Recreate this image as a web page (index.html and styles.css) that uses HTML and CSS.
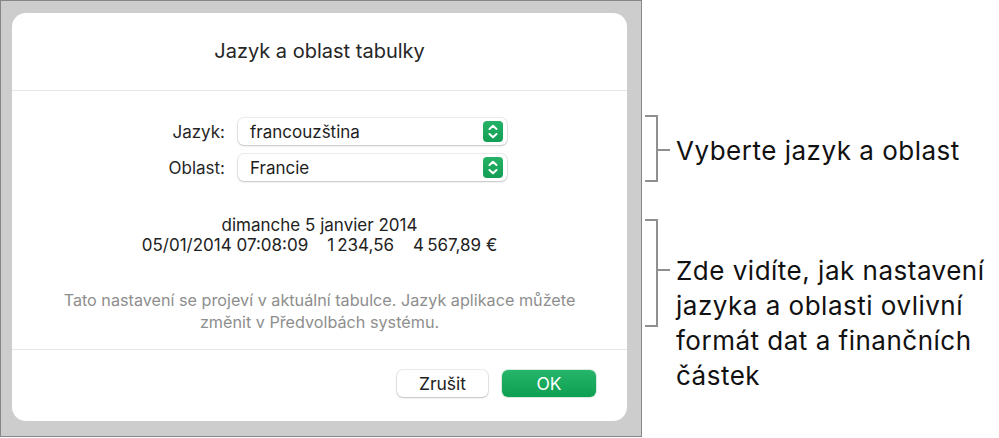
FILE: index.html
```html
<!DOCTYPE html>
<html lang="cs">
<head>
  <meta charset="UTF-8">
  <title>Jazyk a oblast tabulky</title>
  <meta name="viewport" content="width=device-width, initial-scale=1.0">
  <link rel="stylesheet" href="styles.css">
</head>
<body>
  <div class="stage">
    <div class="backdrop">
      <div class="dialog">
        <h1 class="dialog-title">Jazyk a oblast tabulky</h1>
        <div class="dialog-body">
          <div class="form">
            <label class="form-label">Jazyk:</label>
            <div class="popup">
              <span>francouzština</span>
              <span class="stepper">
                <svg width="20" height="21" viewBox="0 0 20 21"><path d="M6.5 8 L10 4.8 L13.5 8 M6.5 13 L10 16.2 L13.5 13" fill="none" stroke="#fff" stroke-width="2" stroke-linecap="round" stroke-linejoin="round"/></svg>
              </span>
            </div>
            <label class="form-label">Oblast:</label>
            <div class="popup">
              <span>Francie</span>
              <span class="stepper">
                <svg width="20" height="21" viewBox="0 0 20 21"><path d="M6.5 8 L10 4.8 L13.5 8 M6.5 13 L10 16.2 L13.5 13" fill="none" stroke="#fff" stroke-width="2" stroke-linecap="round" stroke-linejoin="round"/></svg>
              </span>
            </div>
          </div>
          <div class="preview">
            <div>dimanche 5 janvier 2014</div>
            <div class="preview-row">
              <span>05/01/2014 07:08:09</span>
              <span>1&#8239;234,56</span>
              <span>4&#8239;567,89&nbsp;€</span>
            </div>
          </div>
          <p class="note">Tato nastavení se projeví v aktuální tabulce. Jazyk aplikace můžete<br>změnit v Předvolbách systému.</p>
        </div>
        <div class="dialog-footer">
          <button class="btn">Zrušit</button>
          <button class="btn btn-ok">OK</button>
        </div>
      </div>
    </div>
    <div class="callouts">
      <div class="callout callout-short">
        <svg class="bracket" width="27" height="67" viewBox="0 0 27 67"><path d="M1 1 H13 V66 H1 M13 35 H26" fill="none" stroke="#8f8f8f" stroke-width="2"/></svg>
        <div class="callout-text">Vyberte jazyk a oblast</div>
      </div>
      <div class="callout callout-long">
        <svg class="bracket" width="27" height="108" viewBox="0 0 27 108"><path d="M1 1 H13 V107 H1 M13 51 H26" fill="none" stroke="#8f8f8f" stroke-width="2"/></svg>
        <div class="callout-text">Zde vidíte, jak nastavení<br>jazyka a oblasti ovlivní<br>formát dat a finančních<br>částek</div>
      </div>
    </div>
  </div>
</body>
</html>
```

FILE: styles.css
```css
body { margin: 0; background: #fff; font-family: Inter, Roboto, "Liberation Sans", sans-serif; color: #222; }
.stage { display: flex; align-items: flex-start; }

/* grey sheet behind the dialog */
.backdrop {
  box-sizing: border-box; width: 642px; height: 437px;
  border: 1px solid #868686; background: #cdcdcd;
  padding: 12px 14px 0 11px;
}
.dialog { width: 615px; height: 408px; background: #fff; border-radius: 14px; display: flex; flex-direction: column; }
.dialog-title {
  margin: 0; height: 77px; line-height: 77px; text-align: center;
  font-size: 20px; font-weight: 400; color: #262626;
  border-bottom: 1px solid #e6e6e6;
}
.dialog-body { height: 259px; border-bottom: 1px solid #e6e6e6; padding-top: 27px; box-sizing: border-box; }

.form { display: grid; grid-template-columns: 213px 269px; column-gap: 13px; row-gap: 9px; align-items: center; }
.form-label { text-align: right; font-size: 17px; color: #262626; }
.popup {
  height: 27px; border-radius: 6px; background: #fff;
  box-shadow: 0 0 0 1px rgba(0, 0, 0, 0.07), 0 1px 2px rgba(0, 0, 0, 0.18);
  display: flex; align-items: center; justify-content: space-between;
  padding: 0 4px 0 12px; font-size: 17px; color: #1e1e1e;
}
.stepper { width: 20px; height: 21px; border-radius: 4px; background: linear-gradient(#25b266, #129f55); display: flex; }

.preview { margin-top: 34px; text-align: center; font-size: 17px; line-height: 20px; color: #222; }
.preview-row { display: flex; justify-content: center; gap: 19px; }

.note { margin: 34px 0 0; text-align: center; font-size: 16.2px; line-height: 22px; color: #8e8e8e; }

.dialog-footer { display: flex; justify-content: flex-end; gap: 14px; padding: 20px 31px 0 0; }
.btn {
  height: 27px; width: 91px; border: none; border-radius: 6px; background: #fff;
  box-shadow: 0 0 0 1px rgba(0, 0, 0, 0.08), 0 1px 2px rgba(0, 0, 0, 0.18);
  font-family: inherit; font-size: 17.5px; color: #222; padding: 0;
}
.btn-ok { width: 94px; background: linear-gradient(#26b56a, #0d9f52); color: #fff; box-shadow: 0 0 0 1px rgba(0, 120, 50, 0.15); }

/* annotations on the right */
.callouts { display: flex; flex-direction: column; padding-left: 2px; }
.callout { display: flex; align-items: flex-start; }
.callout-short { margin-top: 115px; align-items: center; }
.callout-long { margin-top: 37px; }
.callout-text { margin-left: 5px; font-size: 26px; letter-spacing: 0.5px; line-height: 35px; color: #111; }
.callout-long .callout-text { margin-top: 34px; }
.callout-short .callout-text { margin-top: 4px; }
```
